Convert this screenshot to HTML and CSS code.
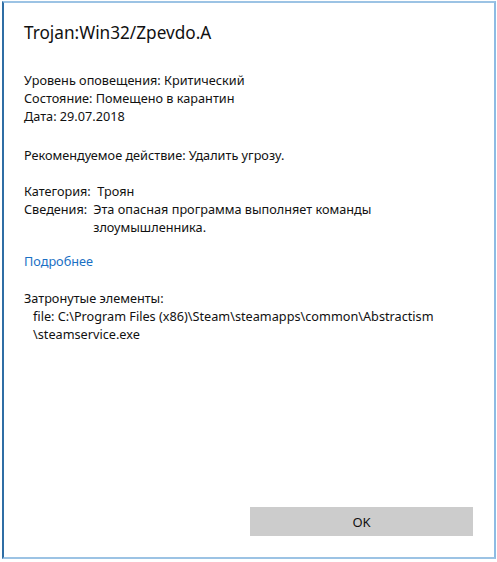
FILE: index.html
```html
<!DOCTYPE html>
<html lang="ru">
<head>
    <meta charset="UTF-8">
    <meta name="viewport" content="width=device-width, initial-scale=1.0">
    <title>Trojan:Win32/Zpevdo.A</title>
    <link rel="stylesheet" href="styles.css">
</head>
<body>

<div class="threat-dialog">
    <h1 class="threat-name">Trojan:Win32/Zpevdo.A</h1>

    <div class="info-block status-block">
        <p>Уровень оповещения: Критический</p>
        <p>Состояние: Помещено в карантин</p>
        <p>Дата: 29.07.2018</p>
    </div>

    <div class="info-block">
        <p>Рекомендуемое действие: Удалить угрозу.</p>
    </div>

    <div class="info-block category-block">
        <p>Категория:&nbsp; Троян</p>
        <div class="details">
            <span class="details-label">Сведения:</span>
            <span class="details-text">Эта опасная программа выполняет команды злоумышленника.</span>
        </div>
    </div>

    <a class="more-link" href="#">Подробнее</a>

    <div class="info-block">
        <p>Затронутые элементы:</p>
        <p class="file-path">file: C:\Program Files (x86)\Steam\steamapps\common\Abstractism<br>\steamservice.exe</p>
    </div>

    <div class="actions">
        <button type="button">OK</button>
    </div>
</div>

</body>
</html>
```

FILE: styles.css
```css
body {
    margin: 0;
    padding: 0;
    background-color: #fff;
    font-family: "Noto Sans", "Open Sans", Arial, sans-serif;
    color: #111;
}

.threat-dialog {
    margin: 1px 1px 3px 2px;
    height: 558px;
    box-sizing: border-box;
    border-top: 2px solid #9cc3e4;
    border-right: 2px solid #8dbbe3;
    border-bottom: 2px solid #9cc3e4;
    border-left: 2px solid #2f6ea5;
    padding: 16px 20px 21px 20px;
    display: flex;
    flex-direction: column;
}

.threat-name {
    font-size: 17.2px;
    font-weight: normal;
    margin: 0 0 24px 0;
    line-height: 28px;
}

.info-block {
    font-size: 12.7px;
    line-height: 18px;
    margin-bottom: 18px;
}

.info-block p {
    margin: 0;
}

.status-block {
    margin-bottom: 21px;
}

.category-block {
    margin-bottom: 16px;
}

.details {
    display: flex;
}

.details-label {
    flex: none;
    margin-right: 6px;
}

.details-text {
    width: 290px;
}

.more-link {
    font-size: 12.7px;
    line-height: 18px;
    color: #1a70c4;
    text-decoration: none;
    margin-bottom: 19px;
    align-self: flex-start;
}

.file-path {
    padding-left: 9px;
}

.actions {
    margin-top: auto;
    display: flex;
    justify-content: flex-end;
    padding-right: 1px;
}

button {
    width: 223px;
    height: 29px;
    background-color: #ccc;
    border: none;
    font-family: inherit;
    font-size: 13px;
    color: #111;
}
```
